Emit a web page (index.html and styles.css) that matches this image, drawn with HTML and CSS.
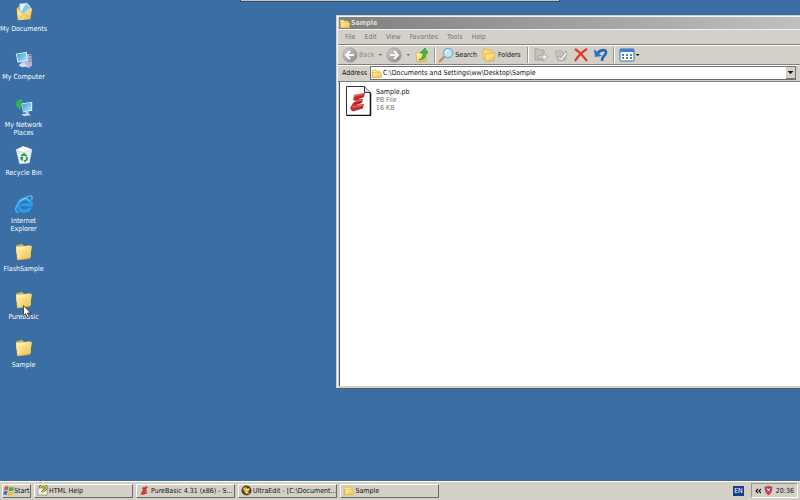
FILE: index.html
```html
<!DOCTYPE html>
<html lang="en">
<head>
<meta charset="utf-8">
<title>Desktop</title>
<link rel="stylesheet" href="styles.css">
</head>
<body>
<svg class="defs" aria-hidden="true">
  <defs>
    <linearGradient id="gold" x1="0" y1="0" x2="1" y2="1"><stop offset="0" stop-color="#fff8b8"/><stop offset="1" stop-color="#efbd42"/></linearGradient>
    <linearGradient id="screen" x1="0" y1="0" x2="1" y2="1"><stop offset="0" stop-color="#3b93dc"/><stop offset="1" stop-color="#a6ecfa"/></linearGradient>
    <linearGradient id="ball" x1="0" y1="0" x2="1" y2="1"><stop offset="0" stop-color="#d2d2d0"/><stop offset="1" stop-color="#858583"/></linearGradient>
    <symbol id="folder" viewBox="0 0 20 20">
      <path d="M2 4l1-1 5-1 2 2 6-1 1 1v11l-2 2-12 1z" fill="#e3b44a"/>
      <path d="M2 5l13-1 1 12-12 2z" fill="#fff2a0"/>
      <path d="M2 8l8-1 1-2 7-1-2 12-12 2z" fill="url(#gold)"/>
      <path d="M4 18l12-2" stroke="#c59738" stroke-width=".7" fill="none"/>
    </symbol>
    <symbol id="minifolder" viewBox="0 0 12 12">
      <path d="M1 2h4l1 1h4v8H1z" fill="#d6a42c"/>
      <path d="M2 5h9.500v5.500H2z" fill="url(#gold)" stroke="#e8bf45" stroke-width=".6"/>
      <path d="M1.500 2.500h3l1 1h4v1h-8z" fill="#fff0a0"/>
    </symbol>
    <symbol id="pb" viewBox="0 0 16 20">
      <path d="M4 3l11-2-1 4-7 2 6 0-1 4-6 2 8-1-1 4-11 3-2-3 3-5 3-2-3-1 1-4z" fill="#c8322e"/>
      <path d="M4 4l9-2M5 9l7-1M2 15l11-2" fill="none" stroke="#e2635a" stroke-width="1.400"/>
      <path d="M1 17l2 2 10-3M5 12l6-2M6 7l7-2" fill="none" stroke="#8c1517" stroke-width=".8"/>
    </symbol>
  </defs>
</svg>

<main class="desktop">
  <div class="peek"></div>

  <nav class="icons" aria-label="Desktop items">
    <a class="item" href="#"><svg class="pic" viewBox="0 0 22 22"><path d="M3 7l6-5 10 5-2 11-13 2z" fill="#e8bd48"/><path d="M6 2l8-1 4 4-1 9-10 1z" fill="#e4f4fb" stroke="#8baec0" stroke-width=".6"/><path d="M13 2l5 4-7 7-4-1z" fill="#8ac9e9"/><path d="M3 8l7 5 8-6 2 0-2 12-13 1z" fill="url(#gold)"/><path d="M5 19l6-6 7 5" fill="none" stroke="#d9aa3b" stroke-width=".7"/></svg><span>My Documents</span></a>
    <a class="item" href="#"><svg class="pic" viewBox="0 0 22 22"><path d="M13 4l6 1 1 12-4 3-4-2z" fill="#b2b3da"/><path d="M16 6l3 0M16 9l3 0M16 12l3 0" stroke="#6871ae"/><path d="M2 4l12-2 1 10-11 2z" fill="#e6edf8"/><path d="M3 5l10-2 1 8-9 2z" fill="url(#screen)"/><path d="M8 14l4-1 1 3 3 2-7 1-4-2z" fill="#d5d9ee"/></svg><span>My Computer</span></a>
    <a class="item" href="#"><svg class="pic" viewBox="0 0 22 22"><circle cx="7" cy="7" r="6" fill="#2675be"/><path d="M3 3l5-2 2 3-3 2 2 4-3 3-4-5z" fill="#3caf48"/><path d="M8 6l12-2 0 10-10 2z" fill="#e2edfa"/><path d="M9 7l10-2 0 8-9 2z" fill="url(#screen)"/><path d="M13 15l3 0 0 2 3 2-8 1-3-2 5-1z" fill="#ccd0e8"/></svg><span>My Network<br>Places</span></a>
    <a class="item" href="#"><svg class="pic" viewBox="0 0 22 22"><path d="M2 4l12-3 6 3-3 15-11 1z" fill="#cbd8da"/><path d="M2 4l8-4 10 4-9 3z" fill="#f7ffff"/><path d="M3 6l8 2 8-3-2 13-10 1z" fill="#edf4ef"/><path d="M8 11l3-2 3 2M14 12l0 3-3 2M9 16l-1-3 2 0" fill="none" stroke="#21954a" stroke-width="2"/></svg><span>Recycle Bin</span></a>
    <a class="item" href="#"><svg class="pic" viewBox="0 0 22 22"><path d="M18 15c-2 5-13 6-13-3 0-8 13-9 14 0H8" fill="none" stroke="#2a9cec" stroke-width="3.600"/><path d="M5 20c-6 0-3-10 6-15 7-4 11-4 8 2" fill="none" stroke="#4fb6f4" stroke-width="1.600"/><path d="M7 8c2-4 8-4 10 0" fill="none" stroke="#82d6fa"/></svg><span>Internet<br>Explorer</span></a>
    <a class="item" href="#"><svg class="pic"><use href="#folder"/></svg><span>FlashSample</span></a>
    <a class="item" href="#"><svg class="pic"><use href="#folder"/></svg><span>Purebasic</span></a>
    <a class="item" href="#"><svg class="pic"><use href="#folder"/></svg><span>Sample</span></a>
  </nav>
  <svg class="cursor" viewBox="0 0 8 13"><path d="M.500.500v10l2.200-2 1.500 4 2-.8-1.700-3.700h3z" fill="#fff" stroke="#222" stroke-width=".7"/></svg>

  <section class="window" aria-label="Sample">
    <header class="title"><svg class="mini"><use href="#minifolder"/></svg><h1>Sample</h1></header>
    <div class="menu"><button>File</button><button>Edit</button><button>View</button><button>Favorites</button><button>Tools</button><button>Help</button></div>
    <div class="tools">
      <div class="group history">
        <button class="dim"><svg class="tool" viewBox="0 0 16 16"><circle cx="8" cy="8" r="7.200" fill="url(#ball)" stroke="#969694" stroke-width=".6"/><path d="M12 8H4m4-4L4 8l4 4" fill="none" stroke="#fff" stroke-width="2"/></svg>Back</button>
        <button aria-label="Back list"><i class="caret soft"></i></button>
        <button aria-label="Forward"><svg class="tool" viewBox="0 0 16 16"><circle cx="8" cy="8" r="7.200" fill="url(#ball)" stroke="#969694" stroke-width=".6"/><path d="M4 8h8M8 4l4 4-4 4" fill="none" stroke="#fff" stroke-width="2"/></svg></button>
        <button aria-label="Forward list"><i class="caret soft"></i></button>
        <button aria-label="Up"><svg class="tool" viewBox="0 0 16 16"><path d="M2 6l4-1 1 1 5-1v9l-9 1z" fill="url(#gold)" stroke="#cf9f36" stroke-width=".6"/><path d="M5 13c4-2 4-5 4-7H6l5-5 3 5h-2c0 5-3 7-7 7z" fill="#43b84b" stroke="#238334" stroke-width=".6"/></svg></button>
      </div>
      <div class="group views">
        <button><svg class="tool" viewBox="0 0 16 16"><path d="M7 9l-6 6" stroke="#c58a59" stroke-width="2.400"/><circle cx="10" cy="6" r="4.600" fill="#b8e9fb" stroke="#75a9cc" stroke-width="1.200"/><path d="M7 5l3-2" stroke="#fff" stroke-width="1.300"/></svg>Search</button>
        <button><svg class="tool" viewBox="0 0 16 16"><path d="M2 2h4l1 1h4v9H2z" fill="#f7da69" stroke="#d4a433" stroke-width=".6"/><path d="M5 7h4l1-1h4l-1 8H4z" fill="url(#gold)" stroke="#d4a433" stroke-width=".6"/></svg>Folders</button>
      </div>
      <div class="group edit">
        <button aria-label="Move To"><svg class="tool" viewBox="0 0 16 16"><path d="M2 2h4l1 1h4v10H2z" fill="#c2c1bd" stroke="#a09f9a" stroke-width=".8"/><path d="M5 9h5V6l5 4-5 4v-3H5z" fill="#eee" stroke="#999" stroke-width=".8"/></svg></button>
        <button aria-label="Copy To"><svg class="tool" viewBox="0 0 16 16"><path d="M2 4l5-1 6 4v6l-8 1z" fill="#c2c1bd" stroke="#b0afaa" stroke-width=".8"/><path d="M4 9l4 2 5-7 1 3-5 7-4-2z" fill="#eee" stroke="#999" stroke-width=".8"/></svg></button>
        <button aria-label="Delete"><svg class="tool" viewBox="0 0 16 16"><path d="M2 2c5 3 8 7 12 12M14 2C9 5 5 9 2 14" fill="none" stroke="#dc3d27" stroke-width="2.200"/></svg></button>
        <button aria-label="Undo"><svg class="tool" viewBox="0 0 16 16"><path d="M4 7c3-5 10-5 9-1-1 3-4 3-4 8" fill="none" stroke="#2367b8" stroke-width="2.600"/><path d="M1 2l1 8 7-1z" fill="#2876ca"/></svg></button>
      </div>
      <div class="group layout">
        <button aria-label="Views"><svg class="tool" viewBox="0 0 16 16"><rect x="1" y="2" width="14" height="12" rx="1" fill="#fff" stroke="#3170ba"/><path d="M1 3.500h14" stroke="#3d82d2" stroke-width="3"/><path d="M4 7v2M8 7v2M12 7v2" stroke="#398cc0" stroke-width="2"/><path d="M4 10v2M8 10v2M12 10v2" stroke="#4d9b50" stroke-width="2"/></svg><i class="caret"></i></button>
      </div>
    </div>
    <div class="address">
      <label for="path">Address</label>
      <div class="field"><svg class="mini"><use href="#minifolder"/></svg><input id="path" type="text" value="C:\Documents and Settings\ww\Desktop\Sample"><button aria-label="Show addresses"><i class="caret"></i></button></div>
    </div>
    <div class="files">
      <a class="file" href="#"><svg class="doc" viewBox="0 0 26 30"><path d="M.500.500h18l6 6v23H.500z" fill="#fff" stroke="#333"/><path d="M18.500.500v6h6" fill="#ddd" stroke="#333"/><path d="M24.500 7v22.500H1" fill="none" stroke="#111" stroke-width="1.500"/><use href="#pb" x="3" y="6" width="18" height="20"/></svg><span><b>Sample.pb</b><small>PB File</small><small>16 KB</small></span></a>
    </div>
  </section>
</main>

<footer class="taskbar">
  <button class="start"><svg class="mini" viewBox="0 0 12 12"><path d="M2 2c2-1 3-1 4 0L5 6C4 5 3 5 1 6z" fill="#e65332"/><path d="M7 2c1 1 3 1 5 0l-1 4c-2 1-4 1-5 0z" fill="#5aaa3c"/><path d="M1 7c2-1 3-1 4 0l-1 4c-1-1-2-1-4 0z" fill="#3775cf"/><path d="M6 7c1 1 3 1 5 0l-1 4c-2 1-4 1-5 0z" fill="#f2be2f"/></svg>Start</button>
  <button class="task"><svg class="mini" viewBox="0 0 12 12"><path d="M1 5l2-2 8 1v7H1z" fill="#f7f7e8" stroke="#777" stroke-width=".7"/><path d="M3 3c1-3 7-3 7 0S6 5 6 8" fill="none" stroke="#333" stroke-width="2.800"/><path d="M3 3c1-3 7-3 7 0S6 5 6 8M6 9v2" fill="none" stroke="#e3d742" stroke-width="1.600"/></svg><span>HTML Help</span></button>
  <button class="task"><svg class="mini" viewBox="0 0 12 12"><use href="#pb" x="1" y="1" width="10" height="10"/></svg><span>PureBasic 4.31 (x86) - S...</span></button>
  <button class="task"><svg class="mini" viewBox="0 0 12 12"><circle cx="6" cy="6" r="5.500" fill="#56451d"/><path d="M2 4l3-2 2 2 3 0-2 3-2 3-2-3z" fill="#e5bd3e"/><path d="M5 6l4-2M5 8l4 1" stroke="#fff2a0"/></svg><span>UltraEdit - [C:\Document...</span></button>
  <button class="task"><svg class="mini"><use href="#minifolder"/></svg><span>Sample</span></button>
  <span class="lang">EN</span>
  <div class="tray"><button aria-label="Show hidden icons"><svg class="chevrons" viewBox="0 0 6 6"><path d="M3 1L1 3l2 2M6 1L4 3l2 2" fill="none" stroke="#111" stroke-width="1.100"/></svg></button><svg class="shield" viewBox="0 0 10 12"><path d="M5 1l4 1c0 5-1 7-4 9-3-2-4-4-4-9z" fill="#d52c3a" stroke="#87868d"/><path d="M3.500 4l3 3m0-3l-3 3" stroke="#fff" stroke-width="1.200"/></svg><time>20:36</time></div>
</footer>
</body>
</html>
```
FILE: styles.css
```css
* { box-sizing: border-box; }

body {
  margin: 0;
  height: 100vh;
  display: flex;
  flex-direction: column;
  overflow: hidden;
  background: #3a6ea5;
  color: #111;
  font: 7px/8px "DejaVu Sans Condensed", "Noto Sans", sans-serif;
}

button, input {
  margin: 0;
  padding: 0;
  border: 0;
  background: none;
  color: inherit;
  font: inherit;
}

button {
  display: flex;
  align-items: center;
  white-space: nowrap;
}

a { color: inherit; text-decoration: none; }
svg { display: block; flex: none; }

.defs { position: absolute; width: 0; height: 0; }
.mini { width: 11px; height: 11px; }

.desktop { position: relative; flex: 1; min-height: 0; }

.peek {
  width: 40%;
  height: 2px;
  margin: 0 auto;
  background: #c0c4c2;
  border: solid #334f6b;
  border-width: 0 1px 1px;
}

.icons {
  position: absolute;
  top: 0;
  left: 0;
  display: grid;
  grid-auto-rows: 48px;
}

.item {
  display: flex;
  flex-direction: column;
  align-items: center;
  gap: 3px;
  padding-top: 2px;
  color: #fff;
  text-align: center;
  white-space: nowrap;
}

.pic { width: 20px; height: 20px; }

.cursor {
  position: absolute;
  top: 305px;
  left: 23px;
  width: 8px;
  height: 13px;
}

.window {
  position: absolute;
  top: 15px;
  bottom: 92px;
  left: 42%;
  right: 0;
  display: flex;
  flex-direction: column;
  padding: 2px 0 2px 2px;
  background: #d4d0c8;
  border-bottom: 1px solid #55595c;
  box-shadow: inset 1px 1px #d4d0c8, inset 2px 2px #f4f3f0;
}

.title {
  display: flex;
  align-items: center;
  gap: 1px;
  height: 12px;
  margin-left: 1px;
  background: linear-gradient(90deg, #808080, #c0c0c0);
  color: #dedbd5;
}

.title h1 { margin: 0; font: inherit; font-weight: bold; }

.menu {
  display: flex;
  align-items: center;
  gap: 9px;
  height: 16px;
  padding-left: 7px;
  border-top: 1px solid #f4f3f0;
  border-bottom: 1px solid #808080;
  color: #77746f;
}

.tools {
  display: flex;
  height: 20px;
  padding: 1px 0;
  border-top: 1px solid #fff;
  border-bottom: 1px solid #808080;
}

.group { display: flex; align-items: center; gap: 4px; padding: 0 4px 0 5px; }
.group + .group { border-left: 1px solid #999690; box-shadow: inset 1px 0 #fff; }
.group button { gap: 1px; }
.tool { width: 16px; height: 16px; }
.history { padding-left: 4px; }
.views { padding: 0 6px 0 3px; }
.dim { color: #8b8882; }

.caret {
  width: 4px;
  height: 2px;
  background: #111;
  clip-path: polygon(0 0, 100% 0, 50% 100%);
}

.soft { background: #777; }

.address {
  display: flex;
  align-items: center;
  gap: 3px;
  height: 17px;
  padding: 0 4px 1px;
  border-top: 1px solid #fff;
  border-bottom: 1px solid #808080;
}

.field {
  flex: 1;
  display: flex;
  align-items: center;
  gap: 1px;
  height: 14px;
  background: #fff;
  border: solid #706e6a;
  border-width: 1px 0 1px 1px;
}

.field input { flex: 1; min-width: 0; outline: 0; }

.field button {
  justify-content: center;
  width: 10px;
  height: 12px;
  background: #d4d0c8;
  border: solid #77746f;
  border-width: 0 1px 1px 0;
}

.field .caret { width: 6px; height: 3px; }

.files {
  flex: 1;
  margin-left: 1px;
  padding: 4px 6px;
  background: #fff;
  border-left: 1px solid #555;
}

.file { display: flex; gap: 4px; }
.file span { display: flex; flex-direction: column; padding-top: 2px; }
.file b { font-weight: normal; }
.file small { font: inherit; color: #77746f; }
.doc { width: 26px; height: 30px; }

.taskbar {
  display: flex;
  align-items: center;
  gap: 3px;
  height: 19px;
  padding: 1px 2px 2px;
  background: #d4d0c8;
  border-top: 1px solid #fff;
}

.start, .task {
  height: 14px;
  border: solid;
  border-width: 1px;
  border-color: #fff #6b6965 #6b6965 #fff;
}

.start { width: 29px; }

.task {
  flex: 0 1 99px;
  gap: 1px;
  padding-left: 2px;
}

.lang {
  margin-left: auto;
  padding: 1px;
  background: #173f86;
  color: #fff;
}

.tray {
  display: flex;
  align-items: center;
  gap: 3px;
  height: 15px;
  margin-left: 4px;
  padding: 0 3px;
  border: 1px solid;
  border-color: #999690 #fff #fff #999690;
}

.chevrons { width: 6px; height: 6px; }
.shield { width: 9px; height: 11px; }
```
